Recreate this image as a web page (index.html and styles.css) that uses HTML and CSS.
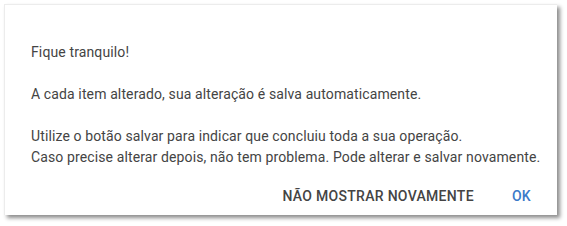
FILE: index.html
```html
<!DOCTYPE html>
<html lang="pt-BR">
<head>
    <meta charset="UTF-8">
    <title>Aviso</title>
    <link rel="stylesheet" href="styles.css">
</head>
<body>
    <div class="dialog">
        <div class="dialog-content">
            <p>Fique tranquilo!</p>
            <p>A cada item alterado, sua alteração é salva automaticamente.</p>
            <p>Utilize o botão salvar para indicar que concluiu toda a sua operação.<br>
            Caso precise alterar depois, não tem problema. Pode alterar e salvar novamente.</p>
        </div>
        <div class="dialog-actions">
            <button class="btn btn-secondary">Não mostrar novamente</button>
            <button class="btn btn-primary">Ok</button>
        </div>
    </div>
</body>
</html>
```

FILE: styles.css
```css
* {
    margin: 0;
    padding: 0;
    box-sizing: border-box;
}

html, body {
    height: 100%;
}

body {
    background: #ffffff;
    font-family: Roboto, 'Liberation Sans', sans-serif;
    padding: 4px 0 0 4px;
}

.dialog {
    width: 553px;
    height: 211px;
    background: #ffffff;
    border-top: 1px solid #ececec;
    border-left: 1px solid #ececec;
    box-shadow: 3px 3px 4px rgba(0, 0, 0, 0.45);
    display: flex;
    flex-direction: column;
}

.dialog-content {
    padding: 37px 10px 0 26px;
    font-size: 14px;
    line-height: 21px;
    letter-spacing: 0.12px;
    color: #444444;
    white-space: nowrap;
}

.dialog-content p {
    margin-bottom: 21px;
}

.dialog-content p:last-child {
    margin-bottom: 0;
}

.dialog-actions {
    margin-top: auto;
    display: flex;
    justify-content: flex-end;
    gap: 22px;
    padding: 0 18px 1px 0;
}

.btn {
    background: none;
    border: none;
    font-family: inherit;
    font-size: 14px;
    font-weight: 500;
    text-transform: uppercase;
    letter-spacing: 0.3px;
    padding: 8px;
    line-height: 20px;
    cursor: pointer;
}

.btn-secondary {
    color: #444444;
}

.btn-primary {
    color: #3b7ac9;
}
```
